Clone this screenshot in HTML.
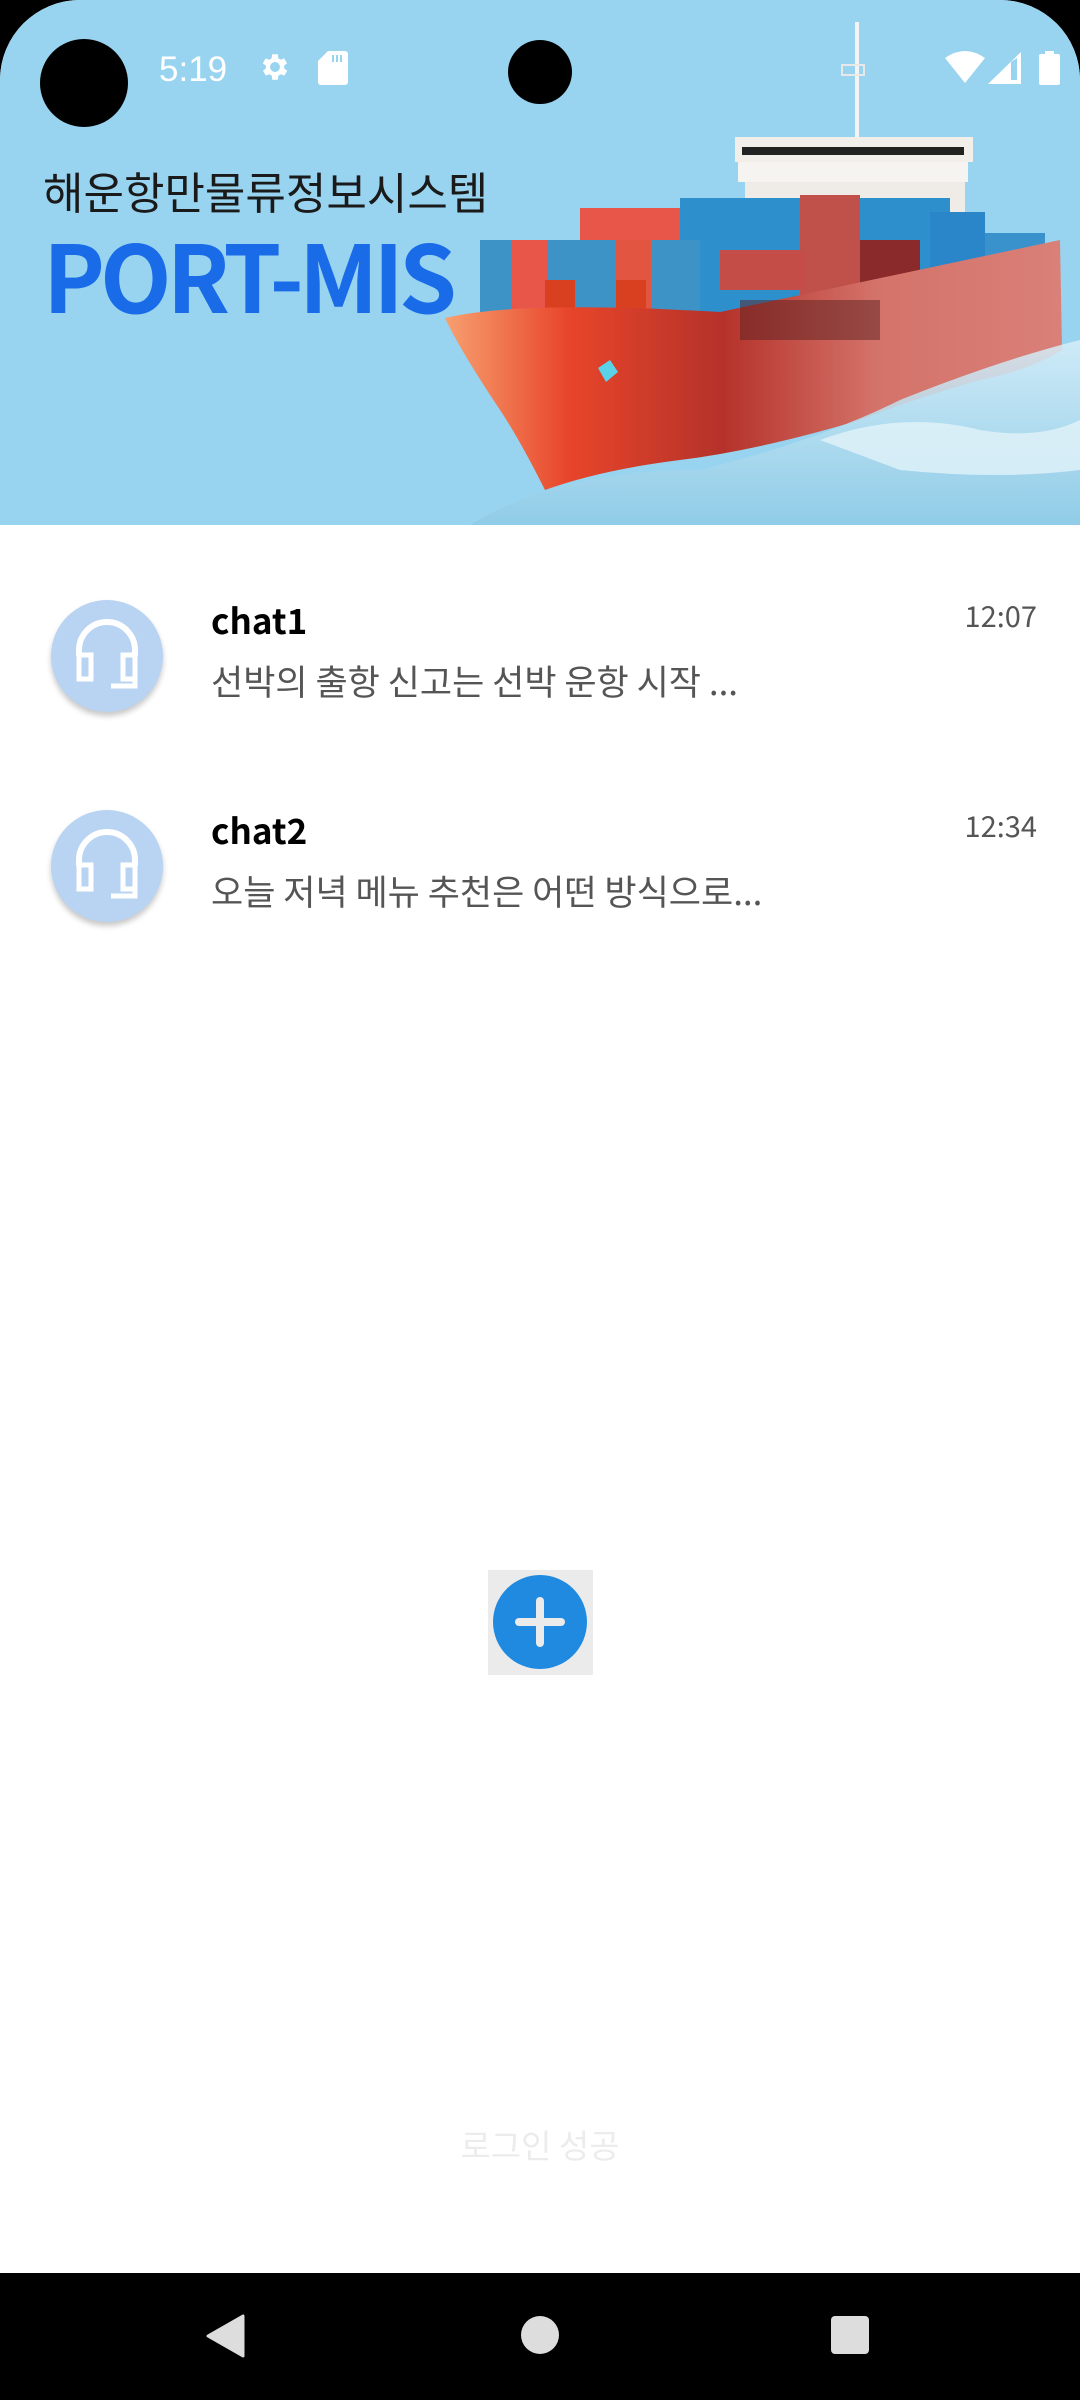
<!DOCTYPE html>
<html><head><meta charset="utf-8"><style>
*{margin:0;padding:0;box-sizing:border-box}
body{width:1080px;height:2400px;background:#000;position:relative;overflow:hidden;font-family:"Liberation Sans","Noto Sans CJK KR",sans-serif}
.screen{position:absolute;left:0;top:0;width:1080px;height:2273px;background:#fff;border-radius:80px 80px 0 0;overflow:hidden}
.hdr{position:absolute;left:0;top:0;width:1080px;height:525px;background:#98d4f0;overflow:hidden}
.t{position:absolute;white-space:nowrap;line-height:1}
.n{font-family:"Noto Sans CJK KR",sans-serif}
.av{position:absolute;left:51px;width:112px;height:112px;border-radius:50%;background:#b8d4f2;box-shadow:0 4px 6px rgba(0,0,0,.22)}
.ttl{left:211px;font-size:35px;font-weight:bold;color:#000}
.sub{left:211px;font-size:35px;color:#555}
.tm{right:43px;font-size:29px;color:#555}
</style></head><body>
<div class="screen">
<div class="hdr">
<svg width="1080" height="525" style="position:absolute;left:0;top:0">
<defs>
<linearGradient id="hull" x1="0" x2="1"><stop offset="0" stop-color="#f7a070"/><stop offset=".2" stop-color="#e8452a"/><stop offset=".45" stop-color="#b5322a"/><stop offset=".7" stop-color="#d4736a"/><stop offset="1" stop-color="#d98078"/></linearGradient>
<linearGradient id="sea" x1="0" y1="0" x2="0" y2="1"><stop offset="0" stop-color="#d8eef8"/><stop offset="1" stop-color="#8fcbe6"/></linearGradient>
</defs>
<rect x="855" y="22" width="4" height="120" fill="#f4f4f4"/>
<rect x="842" y="65" width="22" height="10" fill="none" stroke="#e8e8e8" stroke-width="2"/>
<rect x="735" y="137" width="238" height="25" fill="#f2efea"/>
<rect x="742" y="147" width="222" height="8" fill="#222"/>
<rect x="738" y="162" width="230" height="20" fill="#f6f4f0"/>
<rect x="745" y="182" width="220" height="70" fill="#efebe6"/>
<rect x="580" y="208" width="190" height="110" fill="#e8564a"/>
<rect x="680" y="198" width="270" height="160" fill="#2d8fcc"/>
<rect x="800" y="195" width="60" height="160" fill="#c0504a"/>
<rect x="930" y="212" width="55" height="100" fill="#2a86c8"/>
<rect x="985" y="233" width="60" height="50" fill="#3a92cc"/>
<rect x="480" y="240" width="220" height="85" fill="#3d93c6"/>
<rect x="512" y="240" width="35" height="85" fill="#e8564a"/>
<rect x="616" y="240" width="35" height="85" fill="#e25540"/>
<rect x="545" y="280" width="30" height="35" fill="#d8401f"/>
<rect x="616" y="280" width="30" height="35" fill="#d8401f"/>
<rect x="720" y="250" width="85" height="40" fill="#c44d48"/>
<rect x="860" y="240" width="60" height="60" fill="#8a2a2a"/>
<path d="M445 318 Q520 300 720 312 L1060 240 L1062 350 Q1030 370 980 380 Q910 400 860 420 Q760 450 680 460 Q600 470 545 490 Q520 440 500 410 Q460 350 445 318 Z" fill="url(#hull)"/>
<rect x="740" y="300" width="140" height="40" fill="#5a2020" opacity=".5"/>
<path d="M598 368 l12 -8 l8 12 l-12 10 z" fill="#5ad2e8"/>
<path d="M470 525 Q560 470 700 470 Q820 440 900 400 Q1000 360 1080 340 L1080 525 Z" fill="url(#sea)" opacity=".85"/>
<path d="M820 440 Q900 410 980 430 Q1040 440 1080 420 L1080 470 Q1000 480 900 470 Z" fill="#eaf6fb" opacity=".7"/>
</svg>
<div style="position:absolute;left:40px;top:39px;width:88px;height:88px;border-radius:50%;background:#000"></div>
<div style="position:absolute;left:508px;top:40px;width:64px;height:64px;border-radius:50%;background:#000"></div>
<div class="t" style="left:159px;top:52px;font-size:35px;color:#fff">5:19</div>
<svg style="position:absolute;left:258px;top:50px" width="34" height="34" viewBox="0 0 24 24"><path fill="#fff" d="M19.4 13a7.5 7.5 0 000-2l2.1-1.6-2-3.5-2.5 1a7.4 7.4 0 00-1.7-1L15 3h-4l-.4 2.9a7.4 7.4 0 00-1.7 1l-2.5-1-2 3.5L6.6 11a7.5 7.5 0 000 2l-2.1 1.6 2 3.5 2.5-1a7.4 7.4 0 001.7 1L11 21h4l.4-2.9a7.4 7.4 0 001.7-1l2.5 1 2-3.5zM13 15.5a3.5 3.5 0 110-7 3.5 3.5 0 010 7z" transform="translate(-1 0)"/></svg>
<svg style="position:absolute;left:318px;top:51px" width="30" height="34" viewBox="0 0 30 34"><path fill="#fff" d="M10 0h17a3 3 0 013 3v28a3 3 0 01-3 3H3a3 3 0 01-3-3V10z"/><rect x="14" y="4" width="2" height="7" fill="#98d4f0"/><rect x="18" y="4" width="2" height="7" fill="#98d4f0"/><rect x="22" y="4" width="2" height="7" fill="#98d4f0"/></svg>
<svg style="position:absolute;left:945px;top:50px" width="40" height="34" viewBox="0 0 40 34"><path fill="#fff" d="M0 8 Q20 -6 40 8 L20 33 Z"/></svg>
<svg style="position:absolute;left:988px;top:52px" width="33" height="32" viewBox="0 0 33 32"><path fill="#fff" d="M33 0V32H0Z"/><path fill="#98d4f0" d="M23 10V28H29V6Z"/></svg>
<svg style="position:absolute;left:1039px;top:51px" width="21" height="34" viewBox="0 0 21 34"><rect x="6" y="0" width="9" height="4" fill="#fff"/><rect x="0" y="3" width="21" height="31" rx="2" fill="#fff"/></svg>
<div class="t n" style="left:43px;top:168px;font-size:44px;color:#1a1a1a">해운항만물류정보시스템</div>
<div class="t n" style="left:43px;top:226px;font-size:93px;font-weight:bold;letter-spacing:-5px;color:#1a6be8">PORT-MIS</div>
</div>

<div class="av" style="top:600px"><svg width="112" height="112" viewBox="0 0 112 112"><path d="M28 56V50a28 28 0 0156 0v6" fill="none" stroke="#fff" stroke-width="6"/><rect x="28" y="55" width="12" height="24" fill="none" stroke="#fff" stroke-width="5"/><rect x="72" y="55" width="12" height="24" fill="none" stroke="#fff" stroke-width="5"/><path d="M84 78v8H60" fill="none" stroke="#fff" stroke-width="5"/></svg></div>
<div class="t n ttl" style="top:602px">chat1</div>
<div class="t n sub" style="top:663px">선박의 출항 신고는 선박 운항 시작 ...</div>
<div class="t n tm" style="top:601px">12:07</div>

<div class="av" style="top:810px"><svg width="112" height="112" viewBox="0 0 112 112"><path d="M28 56V50a28 28 0 0156 0v6" fill="none" stroke="#fff" stroke-width="6"/><rect x="28" y="55" width="12" height="24" fill="none" stroke="#fff" stroke-width="5"/><rect x="72" y="55" width="12" height="24" fill="none" stroke="#fff" stroke-width="5"/><path d="M84 78v8H60" fill="none" stroke="#fff" stroke-width="5"/></svg></div>
<div class="t n ttl" style="top:812px">chat2</div>
<div class="t n sub" style="top:873px">오늘 저녁 메뉴 추천은 어떤 방식으로...</div>
<div class="t n tm" style="top:811px">12:34</div>

<div style="position:absolute;left:488px;top:1570px;width:105px;height:105px;background:#ebebeb"></div>
<div style="position:absolute;left:493px;top:1575px;width:94px;height:94px;border-radius:50%;background:#1f8ae0"></div>
<div style="position:absolute;left:515px;top:1618px;width:50px;height:8px;border-radius:4px;background:#ebebeb"></div>
<div style="position:absolute;left:536px;top:1597px;width:8px;height:50px;border-radius:4px;background:#ebebeb"></div>

<div class="t n" style="left:0;width:1080px;text-align:center;top:2128px;font-size:33px;color:#ececec">로그인 성공</div>
</div>
<svg style="position:absolute;left:205px;top:2314px" width="40" height="44" viewBox="0 0 40 44"><path d="M38 2V42L3 22Z" fill="#ddd" stroke="#ddd" stroke-width="3" stroke-linejoin="round"/></svg>
<div style="position:absolute;left:521px;top:2316px;width:38px;height:38px;border-radius:50%;background:#ddd"></div>
<div style="position:absolute;left:831px;top:2316px;width:38px;height:38px;border-radius:4px;background:#ddd"></div>
</body></html>
